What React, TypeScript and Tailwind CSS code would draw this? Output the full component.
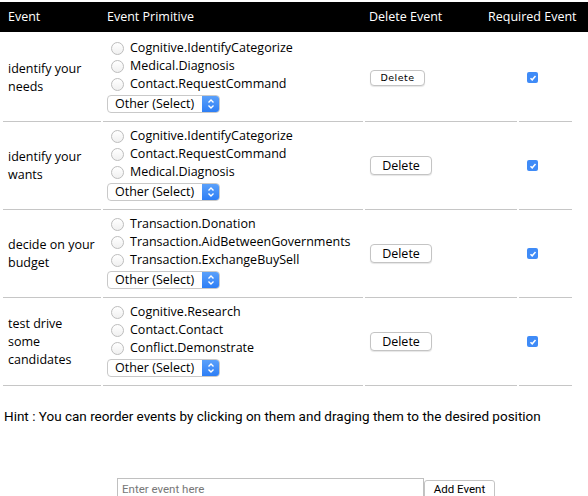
const EVENTS = [
  {
    name: 'identify your needs',
    primitives: ['Cognitive.IdentifyCategorize', 'Medical.Diagnosis', 'Contact.RequestCommand'],
    small: true,
  },
  {
    name: 'identify your wants',
    primitives: ['Cognitive.IdentifyCategorize', 'Contact.RequestCommand', 'Medical.Diagnosis'],
  },
  {
    name: 'decide on your budget',
    primitives: ['Transaction.Donation', 'Transaction.AidBetweenGovernments', 'Transaction.ExchangeBuySell'],
  },
  {
    name: 'test drive some candidates',
    primitives: ['Cognitive.Research', 'Contact.Contact', 'Conflict.Demonstrate'],
  },
];

function Radio() {
  return (
    <span className="w-[13px] h-[13px] rounded-full border border-[#bdbdbd] bg-gradient-to-b from-white to-[#f0f0f0] shrink-0" />
  );
}

function SelectBox() {
  return (
    <div className="mt-[2px] ml-[-1px] flex h-[18px] w-[113px] items-stretch rounded-[4px] border border-[#c9c9c9] bg-white overflow-hidden">
      <span className="flex-1 pl-[7px] leading-[16px] text-[12.5px] text-black">Other (Select)</span>
      <span className="w-[17px] bg-gradient-to-b from-[#5aa0fa] to-[#2d7ef5] flex items-center justify-center">
        <svg width="8" height="12" viewBox="0 0 8 12" fill="none" stroke="white" strokeWidth="1.4">
          <path d="M1.5 4.5 L4 2 L6.5 4.5" />
          <path d="M1.5 7.5 L4 10 L6.5 7.5" />
        </svg>
      </span>
    </div>
  );
}

function CheckBox() {
  return (
    <span className="w-[11px] h-[11px] rounded-[2px] bg-[#3f8bf7] flex items-center justify-center">
      <svg width="8" height="8" viewBox="0 0 8 8" fill="none" stroke="white" strokeWidth="1.5">
        <path d="M1.5 4.2 L3.2 5.8 L6.5 2" />
      </svg>
    </span>
  );
}

export default function App() {
  return (
    <div className="w-[588px] h-[496px] overflow-hidden bg-white pt-[2px] font-['Open_Sans',sans-serif] text-black">
      <div className="h-[30px] bg-black text-white text-[12.5px] font-medium flex items-center">
        <span className="w-[107px] pl-[8px]">Event</span>
        <span className="w-[262px]">Event Primitive</span>
        <span className="w-[119px]">Delete Event</span>
        <span>Required Event</span>
      </div>

      <div className="mt-[2px] pl-[3px]">
        {EVENTS.map((ev) => (
          <div key={ev.name} className="grid grid-cols-[98px_260px_152px_53px] gap-x-[2px]">
            <div className="border-b border-[#c6c6c6] pl-[5px] pr-[4px] flex items-center text-[12.5px] leading-[18px]">
              {ev.name}
            </div>
            <div className="border-b border-[#c6c6c6] pt-[5px] pb-[8px] pl-[5px]">
              {ev.primitives.map((p) => (
                <div key={p} className="flex items-center h-[18px] gap-[6px] pl-[3px] text-[12.5px] whitespace-nowrap">
                  <Radio />
                  <span>{p}</span>
                </div>
              ))}
              <SelectBox />
            </div>
            <div className="border-b border-[#c6c6c6] flex items-center pl-[5px]">
              {ev.small ? (
                <button className="w-[55px] h-[16px] rounded-[4px] border border-[#c4c4c4] bg-white text-[9.5px] leading-[14px] tracking-[0.5px] font-['DejaVu_Sans',sans-serif] shadow-[0_1px_1px_rgba(0,0,0,0.1)]">
                  Delete
                </button>
              ) : (
                <button className="w-[62px] h-[19px] rounded-[4px] border border-[#c4c4c4] bg-white text-[12.5px] leading-[17px] shadow-[0_1px_1px_rgba(0,0,0,0.1)]">
                  Delete
                </button>
              )}
            </div>
            <div className="border-b border-[#c6c6c6] flex items-center pl-[8px]">
              <CheckBox />
            </div>
          </div>
        ))}
      </div>

      <p className="mt-[22px] pl-[4px] font-['Roboto',sans-serif] text-[13.5px] leading-[16px]">
        Hint : You can reorder events by clicking on them and draging them to the desired position
      </p>

      <div className="mt-[54px] pl-[117px] flex items-start">
        <input
          className="w-[307px] h-[22px] border border-[#c0c0c0] px-[4px] text-[11.5px] leading-[14px] font-['Roboto',sans-serif] placeholder:text-[#777] outline-none"
          placeholder="Enter event here"
        />
        <button className="mt-[2px] w-[71px] h-[20px] rounded-[3px] border border-[#c4c4c4] bg-white text-[11.5px] leading-[14px] pb-[3px] font-['Roboto',sans-serif]">
          Add Event
        </button>
      </div>
    </div>
  );
}
